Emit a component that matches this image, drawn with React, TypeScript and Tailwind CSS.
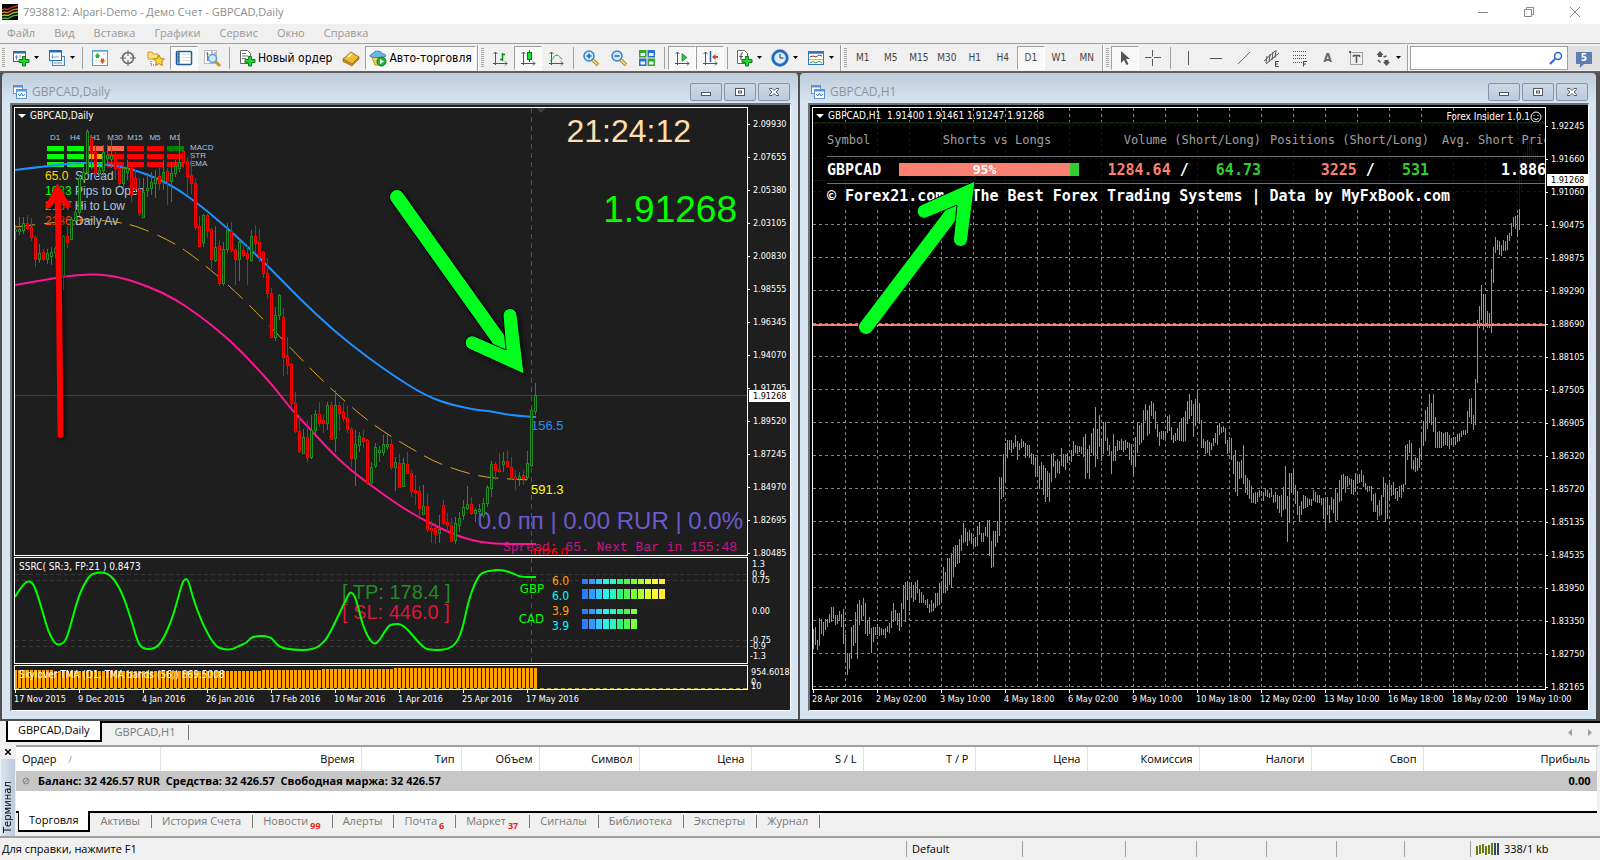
import type { ReactNode } from 'react';
import { clsx } from 'clsx';

/* ------------------------------------------------------------------ */
/* Chart data: plot coordinates, already projected to canvas pixels    */
/* ------------------------------------------------------------------ */

// high, body top, body bottom, low; "+" marks a bullish candle
const DAILY_CANDLES = `
225 229 231 240+,217 229 231 235+,217 223 230 234+,215 223 228 230,218 227 237 241,236 237 259 267,244 253 259 263+,249 252 259 261,
249 253 259 264+,247 252 256 265+,246 248 252 258+,248 252 270 275,235 236 275 290+,226 236 242 248,217 219 239 240+,203 212 220 222+,
175 178 212 216+,168 172 179 182+,129 131 172 174+,137 138 153 170,145 152 173 178,166 170 173 177+,145 152 170 178+,145 155 158 165+,
137 155 159 168+,152 159 168 180,165 168 183 186,166 168 183 187+,160 168 172 180+,166 168 195 202,170 178 188 192,178 190 213 216,
178 192 217 218+,173 188 190 197+,172 182 188 195+,170 177 183 198+,167 176 183 190,160 172 180 190+,168 171 181 205,162 173 181 202+,
160 166 173 177+,133 162 168 172+,149 151 162 168,157 161 176 194,155 175 183 194,178 183 227 230,216 226 246 247,214 215 242 247+,
214 215 230 238,228 229 259 269,226 247 260 262+,240 246 283 286,242 249 283 286+,223 230 249 253+,222 231 250 253,248 250 259 285,
241 242 259 281+,243 250 255 257,245 253 258 285,230 236 260 262+,225 236 243 252,229 242 256 262,251 252 273 278,258 273 293 298,
288 293 337 338,307 315 337 341+,294 295 315 320+,308 317 357 376,337 356 365 375,363 364 403 408,392 403 431 433,415 431 451 453,
429 437 453 454+,420 437 457 462,415 430 457 459+,410 414 430 437+,402 414 423 427,415 420 423 433,402 405 423 430+,402 405 439 440,
390 405 438 452+,402 405 413 431,403 412 418 422,406 418 429 433,427 429 458 467,430 444 458 486+,432 436 445 452+,430 438 441 448,
439 440 482 485,462 467 482 486+,443 447 466 468+,446 450 452 462+,435 444 452 456+,435 444 446 450+,439 444 467 470,457 462 467 491+,
454 463 487 488,458 463 486 487+,452 464 473 474,470 473 491 497,475 490 492 505,486 491 508 517,485 506 514 515+,494 506 529 532,
521 528 530 543,523 528 534 544,515 529 533 543+,500 505 523 525,513 522 525 533,518 525 541 542,517 523 540 544+,512 518 525 532+,
500 507 515 520+,486 504 508 510+,497 504 513 515,508 510 513 522+,504 509 511 524+,498 503 515 518+,485 487 503 507+,461 464 488 497+,
462 464 470 480,453 469 471 473,452 461 464 472+,450 461 466 467,457 467 477 480,470 477 479 490,472 476 478 486+,470 475 478 485,
451 463 477 480+,408 410 465 467+,383 395 411 415+`
  .split(',')
  .map((row) => ({ up: row.endsWith('+'), v: row.replace('+', '').trim().split(' ').map(Number) }));

// high-low pairs of the hourly bars
const HOURLY_BARS = `
629-649 627-645 640-650 618-646 619-634 622-636 619-630 619-627 614-623 607-622 607-619 615-625 615-624 611-620 614-627 609-644 634-663 653-675 653-669 627-659
625-646 612-643 604-659 600-625 605-620 598-616 603-634 621-636 617-634 628-653 627-642 627-635 625-635 627-636 628-635 629-635 628-638 626-632 623-633 611-628
603-622 610-621 613-625 613-631 603-627 585-609 582-622 581-600 582-611 582-598 585-602 582-600 580-593 589-603 592-603 595-603 600-605 599-608 604-613 600-612
603-611 593-608 593-606 583-605 581-603 567-593 572-593 558-591 558-585 553-588 547-577 545-567 545-564 539-563 535-551 523-543 528-542 532-546 530-541 533-544
538-546 537-547 526-546 522-535 533-542 533-542 527-536 520-537 520-556 541-568 531-567 531-547 521-543 477-536 477-499 454-497 443-482 440-458 440-450 440-453
443-449 435-447 441-460 443-450 439-448 441-447 443-458 445-456 445-458 453-464 454-465 457-477 459-477 466-489 462-480 465-495 468-502 471-497 473-502 454-482
453-467 461-478 459-473 461-474 448-466 454-467 454-470 453-463 456-461 450-462 441-456 445-453 446-454 446-452 447-454 437-457 434-479 449-473 445-479 433-453
428-456 407-467 429-459 415-447 439-461 422-454 422-441 438-451 445-455 451-474 434-461 446-461 440-451 441-450 439-450 441-452 440-450 442-448 443-460 444-465
456-474 437-467 422-453 425-445 423-443 410-440 404-421 410-436 405-434 401-416 403-419 411-429 424-437 432-446 431-439 431-440 431-440 416-433 415-431 427-440
435-443 433-441 428-440 422-441 418-441 417-442 411-441 401-424 394-419 400-416 404-437 399-426 391-420 403-424 420-448 439-448 441-454 440-453 442-456 443-450
438-446 433-443 425-445 423-435 427-433 426-432 428-444 440-454 437-452 438-460 455-474 450-492 461-496 462-479 460-478 445-484 475-493 478-495 480-499 486-503
493-503 492-504 492-502 490-497 491-496 492-501 488-496 490-497 493-498 488-497 495-503 492-502 495-509 496-513 495-517 487-510 466-509 496-542 473-523 473-493
470-494 485-504 491-515 506-522 501-515 495-509 496-508 498-507 499-505 499-506 490-501 492-502 495-503 495-503 498-505 498-519 497-528 497-515 505-523 497-510
499-513 488-521 493-520 480-502 475-501 474-489 476-493 476-487 478-485 479-494 480-495 473-492 477-484 474-483 470-482 475-487 483-490 486-492 486-491 486-501
494-512 493-512 505-520 500-516 495-515 477-497 483-522 485-519 483-500 485-496 482-495 488-499 491-501 486-497 485-498 484-492 445-485 444-460 440-453 443-469
460-470 457-472 458-471 448-468 433-460 421-446 410-441 407-429 394-423 403-425 394-432 417-448 432-448 431-448 432-448 433-446 432-445 432-446 435-449 438-445
437-446 437-445 434-442 433-441 431-437 430-435 430-435 411-433 399-417 398-424 415-430 379-425 320-383 306-328 285-320 294-330 294-327 311-328 313-328 269-333
247-283 237-253 240-250 241-255 245-256 240-251 241-251 235-250 233-241 223-236 217-227 216-229 215-237 155-230 162-189 153-168 153-165 142-165 140-168 146-160
150-165 153-166 151-164 165-181`
  .trim()
  .split(/\s+/)
  .map((pair) => pair.split('-').map(Number));

const UPPER_BAND =
  '15,170 47,166 87,162 123,167 147,174 173,186 200,205 233,233 267,265 300,299 333,330 367,357 400,380 425,395 445,403 475,410 490,411 503,414 520,416 536,417';
const MIDDLE_BAND =
  '15,227 50,223 87,219 117,222 137,226 173,242 200,261 233,289 267,323 300,358 330,388 363,417 387,434 412,449 435,462 460,471 483,477 507,479 532,480';
const LOWER_BAND =
  '15,285 50,279 67,276 95,274 120,277 150,287 175,299 200,316 230,340 255,366 275,388 290,408 310,429 333,454 353,472 380,492 400,506 420,518 440,528 460,537 488,544 536,544';
const SSRC_LINE =
  '15,597 24,582 32,581 37,593 43,613 48,631 55,644 60,645 66,641 72,620 79,595 87,579 93,573 106,572 115,580 123,595 132,622 137,640 142,649 155,649 163,640 173,617 182,583 185,579 188,579 193,598 202,623 213,643 220,649 232,650 238,646 247,643 252,636 271,636 278,647 293,650 313,650 325,642 335,623 347,597 351,591 356,598 363,627 372,644 378,643 388,626 393,624 403,624 420,644 427,650 447,650 457,643 463,627 468,603 473,588 478,577 483,572 495,570 503,570 515,574 520,577 536,577';

// quadratic segments through the midpoints, so indicator lines bend softly
function smooth(points: string) {
  const p = points.split(' ').map((pair) => pair.split(',').map(Number));
  const last = p[p.length - 1];
  const mid = p
    .slice(1, -1)
    .map(([x, y], i) => {
      const [nx, ny] = p[i + 2];
      return `Q${x} ${y} ${(x + nx) / 2} ${(y + ny) / 2}`;
    })
    .join('');
  return `M${p[0].join(' ')}${mid}L${last.join(' ')}`;
}

const DAILY_PRICES = ['2.09930', '2.07655', '2.05380', '2.03105', '2.00830', '1.98555', '1.96345', '1.94070', '1.91795', '1.89520', '1.87245', '1.84970', '1.82695', '1.80485'];
const HOURLY_PRICES = ['1.92245', '1.91660', '1.91060', '1.90475', '1.89875', '1.89290', '1.88690', '1.88105', '1.87505', '1.86905', '1.86320', '1.85720', '1.85135', '1.84535', '1.83950', '1.83350', '1.82750', '1.82165'];
const DAILY_DATES = ['17 Nov 2015', '9 Dec 2015', '4 Jan 2016', '26 Jan 2016', '17 Feb 2016', '10 Mar 2016', '1 Apr 2016', '25 Apr 2016', '17 May 2016'];
const HOURLY_DATES = ['28 Apr 2016', '2 May 02:00', '3 May 10:00', '4 May 18:00', '6 May 02:00', '9 May 10:00', '10 May 18:00', '12 May 02:00', '13 May 10:00', '16 May 18:00', '18 May 02:00', '19 May 10:00'];

const TREND_COLUMNS = [
  { name: 'D1', cells: ['bg-[#00ff00]', 'bg-[#00ff00]', 'bg-[#00ff00]'] },
  { name: 'H4', cells: ['bg-[#00ff00]', 'bg-[#00ff00]', 'bg-[#00ff00]'] },
  { name: 'H1', cells: ['bg-[#ff6347]', 'bg-[#ffa500]', 'bg-[#00ff00]'] },
  { name: 'M30', cells: ['bg-[#ff6347]', 'bg-[#ff0000]', 'bg-[#ff0000]'] },
  { name: 'M15', cells: ['bg-[#ff0000]', 'bg-[#ff0000]', 'bg-[#ff0000]'] },
  { name: 'M5', cells: ['bg-[#ff0000]', 'bg-[#ff0000]', 'bg-[#ff0000]'] },
  { name: 'M1', cells: ['bg-[#008000]', 'bg-[#ff0000]', 'bg-[#ff0000]'] },
];

const METER_COLORS = ['#2e7bff', '#2e9bff', '#2ecbff', '#2ef0f0', '#2ef5b8', '#30f080', '#50f550', '#7bff3c', '#a8ff38', '#d8ff38', '#fff838', '#ffe838'];

/* ------------------------------------------------------------------ */
/* Icons                                                               */
/* ------------------------------------------------------------------ */

function Icon({ children, size = 'size-[18px]' }: { children: ReactNode; size?: string }) {
  return (
    <svg viewBox="0 0 18 18" className={clsx(size, 'shrink-0')} fill="none" aria-hidden="true">
      {children}
    </svg>
  );
}

const plus = <path d="M10.500 7.500h3v3h3.500v3h-3.500v3.500h-3v-3.500H7v-3h3.500z" fill="#16e02c" stroke="#0b7d17" />;
const axes = <path d="M4.500 3v13M2.500 5l2-2 2 2M2 14.500h14M14 12.500l2 2-2 2" stroke="#555" />;
const lens = (
  <>
    <path d="M11 11l5 5" stroke="#b8860b" strokeWidth="3.500" />
    <path d="M11 11l4.500 4.500" stroke="#ffe48a" strokeWidth="1.500" />
    <circle cx="7" cy="7" r="5" fill="#cfe9fb" stroke="#3b82c4" strokeWidth="1.500" />
  </>
);

const NewChartIcon = () => (
  <Icon>
    <rect x="1.500" y="2.500" width="12" height="10" fill="#fff" stroke="#2c6aa8" />
    <path d="M1 3.500h13" stroke="#2c6aa8" strokeWidth="2" />
    <path d="M4.500 6v5M3 8h3M8 6v3" stroke="#6a8fb5" />
    {plus}
  </Icon>
);

const ProfilesIcon = () => (
  <Icon>
    <rect x="4.500" y="7.500" width="12" height="9" fill="#e8f2fb" stroke="#4a86c0" />
    <rect x="1.500" y="1.500" width="12" height="10" fill="#fff" stroke="#2c6aa8" />
    <path d="M1 2.500h13" stroke="#2c6aa8" strokeWidth="2" />
    <path d="M4.500 5v5M3 8h8M6 14h8" stroke="#7fa5cc" />
  </Icon>
);

const MarketWatchIcon = () => (
  <Icon>
    <rect x="1.500" y="1.500" width="15" height="15" fill="#fff" stroke="#5d9bd3" />
    <path d="M2 2.500h14" stroke="#8fbde6" />
    <path d="M6.500 4l3 3.500h-1.500V9H5V7.500H3.500z" fill="#26b33a" />
    <path d="M11.500 15l-3-3.500H10V9.500h3v2h1.500z" fill="#f0562a" />
    <path d="M12 5h3M3 12h3" stroke="#c9d6e2" />
  </Icon>
);

const NavigatorIcon = () => (
  <Icon>
    <circle cx="9" cy="9" r="5.500" stroke="#666" strokeWidth="1.500" />
    <path d="M9 1v6M9 11v6M1 9h6M11 9h6" stroke="#666" />
  </Icon>
);

const FavoritesIcon = () => (
  <Icon>
    <path d="M1 3h4l1 2h5v5H1z" fill="#ffe07a" stroke="#c99a1c" />
    <path d="M4 12v4h4" stroke="#555" strokeDasharray="1 1" />
    <path d="M12 6l1.700 3.500 3.800.500-2.800 2.600.700 3.900-3.400-1.900-3.400 1.900.700-3.900L6.500 10l3.800-.500z" fill="#ffd534" stroke="#b8860b" />
  </Icon>
);

const TerminalIcon = () => (
  <Icon>
    <rect x="1.500" y="2.500" width="15" height="13" rx="1" fill="#fff" stroke="#1f5c99" strokeWidth="1.500" />
    <rect x="2" y="3" width="3" height="12" fill="#5b9bd8" />
    <path d="M7 5.500h8M7 8.500h8M7 11.500h8" stroke="#d5dbe2" />
    <path d="M3 5h1M3 8h1M3 11h1" stroke="#123" />
  </Icon>
);

const TesterIcon = () => (
  <Icon>
    <rect x="1.500" y="1.500" width="12" height="13" fill="#fff" stroke="#b9b9b9" />
    <path d="M4.500 3v9M3 5h3M9 2v4M12 3v5" stroke="#777" />
    <path d="M12 12l5 5" stroke="#c9961a" strokeWidth="3" />
    <circle cx="9.500" cy="9.500" r="4" fill="#cfe6fb" stroke="#5d9bd3" strokeWidth="1.500" />
  </Icon>
);

const NewOrderIcon = () => (
  <Icon>
    <path d="M2.500 1.500h7l3 3v10h-10z" fill="#fff" stroke="#666" />
    <path d="M4 4.500h4M4 7h6M4 9.500h4" stroke="#777" />
    {plus}
  </Icon>
);

const BookIcon = () => (
  <Icon>
    <path d="M1 10l8-7 8 5-7 8z" fill="#eebc3c" stroke="#a8740e" />
    <path d="M1 10v2.500L10 17l7-7V8l-7 7z" fill="#c98e1b" stroke="#8a5d08" strokeWidth=".6" />
    <path d="M6 8l4-3.500" stroke="#fff0b0" strokeWidth="2" />
  </Icon>
);

const AutoTradeIcon = () => (
  <Icon>
    <path d="M3 8l3 8h6l3-8z" fill="#f7d35c" stroke="#c1911c" />
    <path d="M1 7c0-2 3-2 3.500-3C5 1.500 12 1.500 12.500 4 13 5 17 5 17 7c0 2-16 2-16 0z" fill="#6fb5e6" stroke="#3b82b8" />
    <circle cx="12.500" cy="12.500" r="4.500" fill="#1fb52f" stroke="#0e7a1a" />
    <path d="M11 10l4 2.500-4 2.500z" fill="#fff" />
  </Icon>
);

const BarsIcon = () => (
  <Icon>
    {axes}
    <path d="M11.500 4v8M9 10.500h2.500M11.500 5.500H14" stroke="#0a8f1d" strokeWidth="1.500" />
  </Icon>
);

const CandlesIcon = () => (
  <Icon>
    {axes}
    <path d="M10.500 1v12" stroke="#0a7a18" />
    <rect x="8.500" y="3.500" width="4" height="7" fill="#1fdc35" stroke="#0a7a18" />
  </Icon>
);

const LineIcon = () => (
  <Icon>
    {axes}
    <path d="M3 12c3-1 4-6 7-6 2 0 3 3 5 4" stroke="#2a9b3a" />
  </Icon>
);

const ZoomInIcon = () => (
  <Icon>
    {lens}
    <path d="M4.500 7h5M7 4.500v5" stroke="#1f66ad" strokeWidth="1.500" />
  </Icon>
);

const ZoomOutIcon = () => (
  <Icon>
    {lens}
    <path d="M4.500 7h5" stroke="#1f66ad" strokeWidth="1.500" />
  </Icon>
);

const TileIcon = () => (
  <Icon>
    <rect x="1" y="1" width="7.500" height="7.500" fill="#3aa330" />
    <rect x="9.500" y="1" width="7.500" height="7.500" fill="#2d6fd0" />
    <rect x="1" y="9.500" width="7.500" height="7.500" fill="#2d6fd0" />
    <rect x="9.500" y="9.500" width="7.500" height="7.500" fill="#3aa330" />
    <path d="M2.500 5.500h4.500M11 5.500h4.500M2.500 14h4.500M11 14h4.500" stroke="#e6f4ff" strokeWidth="3" />
  </Icon>
);

const AutoScrollIcon = () => (
  <Icon>
    {axes}
    <path d="M9 4.500l5 4-5 4z" fill="#27c93a" stroke="#0a7a18" strokeWidth=".6" />
  </Icon>
);

const ShiftIcon = () => (
  <Icon>
    {axes}
    <path d="M9.500 2v11" stroke="#1f66ad" strokeWidth="1.500" />
    <path d="M11 8l3.500-3v2H17v2h-2.500v2z" fill="#d1481c" />
  </Icon>
);

const IndicatorsIcon = () => (
  <Icon>
    <path d="M2.500 1.500h7l3 3v10h-10z" fill="#fff" stroke="#666" />
    <path d="M8 4c-1.500-.500-2 .500-2 2v5M4.500 7.500H8" stroke="#444" />
    {plus}
  </Icon>
);

const ClockIcon = () => (
  <Icon>
    <circle cx="9" cy="9" r="7" fill="#d8ecfb" stroke="#1d6fc6" strokeWidth="2.500" />
    <circle cx="9" cy="9" r="8.300" stroke="#164e8c" strokeWidth=".6" />
    <path d="M9 5v4h3.500" stroke="#333" />
  </Icon>
);

const TemplateIcon = () => (
  <Icon>
    <rect x="1.500" y="2.500" width="15" height="13" fill="#fff" stroke="#2f78bd" />
    <path d="M1 3.500h16" stroke="#2f78bd" strokeWidth="2.500" />
    <path d="M3 8l3-1 3 1 3-2 3 1" stroke="#8b3a1c" />
    <path d="M2 10.500h14" stroke="#9ab8d6" />
    <path d="M3 14l3-1.500 3 1.500 3-2 3 2" stroke="#2a9b3a" />
  </Icon>
);

const CursorIcon = () => (
  <Icon>
    <path d="M5 2v12l3-3 2.500 5 2-1-2.500-5h4z" fill="#555" />
  </Icon>
);

const CrosshairIcon = () => (
  <Icon>
    <path d="M8.500 1v6.500M8.500 10v7M1 8.500h6.500M10 8.500h7" stroke="#555" />
  </Icon>
);

const VLineIcon = () => (
  <Icon>
    <path d="M9.500 2v14" stroke="#555" />
  </Icon>
);

const HLineIcon = () => (
  <Icon>
    <path d="M3 9.500h12" stroke="#555" />
  </Icon>
);

const TrendIcon = () => (
  <Icon>
    <path d="M3 15L15 3" stroke="#666" />
  </Icon>
);

const ChannelIcon = () => (
  <Icon>
    <path d="M1 12L12 2M3 15L16 4" stroke="#555" />
    <path d="M4 7l-1 7M7 5l-1 8M10 3l-1 8M13 1l-1 8" stroke="#555" />
    <path d="M16 12.500h-3.500v5H16M12.500 15H15" stroke="#444" />
  </Icon>
);

const FiboIcon = () => (
  <Icon>
    <path d="M2 2.500h14M2 6.500h14M2 9.500h14M2 13.500h9" stroke="#555" strokeDasharray="1 1" />
    <path d="M12.500 17.500v-5H16M12.500 15H15" stroke="#444" />
  </Icon>
);

const LabelIcon = () => (
  <Icon>
    <rect x="3.500" y="3.500" width="12" height="12" stroke="#555" strokeDasharray="1 1" />
    <path d="M6 6.500h7M9.500 6v8M6.500 6v2M12.500 6v2" stroke="#555" strokeWidth="1.500" />
    <path d="M2 2h2v2H2z" fill="#555" />
  </Icon>
);

const ShapesIcon = () => (
  <Icon>
    <path d="M6 2l3.500 4H8v2H4V6H2.500zM12.500 17L9 13h1.500v-2h4v2H16z" fill="#555" />
    <path d="M4 11l2.500 2.500M9.500 8l3-1" stroke="#555" strokeWidth="1.500" />
  </Icon>
);

const ChartDocIcon = () => (
  <svg viewBox="0 0 14 14" className="size-[14px] shrink-0" fill="none" aria-hidden="true">
    <rect x=".5" y=".5" width="9" height="8" fill="#fff" stroke="#5b93d6" />
    <path d="M0 1.500h10" stroke="#5b93d6" strokeWidth="2" />
    <rect x="3.500" y="4.500" width="10" height="9" fill="#fff" stroke="#5b93d6" />
    <path d="M3 5.500h11" stroke="#5b93d6" strokeWidth="2" />
    <path d="M5 9l2 2 1.500-3L10 11l2-2" stroke="#4a7fd0" />
  </svg>
);

const Caret = () => (
  <svg viewBox="0 0 5 3" className="h-[3px] w-[5px] shrink-0" aria-hidden="true">
    <path d="M0 0h5L2.500 3z" fill="#000" />
  </svg>
);

/* ------------------------------------------------------------------ */
/* Toolbar                                                             */
/* ------------------------------------------------------------------ */

interface ToolButtonProps {
  label: string;
  pressed?: boolean;
  caret?: boolean;
  children: ReactNode;
}

function ToolButton({ label, pressed, caret, children }: ToolButtonProps) {
  return (
    <button
      type="button"
      aria-label={label}
      aria-pressed={pressed}
      className={clsx(
        'flex h-6 shrink-0 items-center justify-center border',
        caret ? 'w-[36px] gap-1' : 'w-[28px]',
        pressed ? 'border-t-[#a0a0a0] border-r-white border-b-white border-l-[#a0a0a0] bg-[#f8f8f8]' : 'border-transparent'
      )}
    >
      {children}
      {caret && <Caret />}
    </button>
  );
}

const Separator = () => <span className="mx-[3px] h-[22px] w-px shrink-0 bg-[#a0a0a0]" />;

const Grip = () => (
  <span className="mx-[2px] h-[20px] w-[3px] shrink-0 bg-[repeating-linear-gradient(to_bottom,#a8a8a8_0_1px,transparent_1px_2px)]" />
);

const BandEdge = () => <span className="ml-[1px] h-[26px] w-[2px] shrink-0 border-l border-[#a0a0a0] bg-white" />;

function Toolbar() {
  return (
    <div className="flex h-[28px] shrink-0 items-center border-t border-[#a0a0a0] bg-[#f0f0f0] font-['DejaVu_Sans_Condensed','DejaVu_Sans',sans-serif]">
      <Grip />
      <ToolButton label="Новый график" caret><NewChartIcon /></ToolButton>
      <ToolButton label="Профили" caret><ProfilesIcon /></ToolButton>
      <Separator />
      <ToolButton label="Обзор рынка"><MarketWatchIcon /></ToolButton>
      <ToolButton label="Окно данных"><NavigatorIcon /></ToolButton>
      <ToolButton label="Навигатор"><FavoritesIcon /></ToolButton>
      <ToolButton label="Терминал" pressed><TerminalIcon /></ToolButton>
      <ToolButton label="Тестер стратегий"><TesterIcon /></ToolButton>
      <Separator />
      <button type="button" className="flex h-6 shrink-0 items-center gap-[2px] px-[5px] text-xs whitespace-nowrap">
        <NewOrderIcon />
        Новый ордер
      </button>
      <ToolButton label="MetaEditor"><BookIcon /></ToolButton>
      <button
        type="button"
        aria-pressed="true"
        className="flex h-6 shrink-0 items-center gap-[2px] border border-t-[#a0a0a0] border-r-white border-b-white border-l-[#a0a0a0] bg-[#f8f8f8] px-[3px] text-xs whitespace-nowrap"
      >
        <AutoTradeIcon />
        Авто-торговля
      </button>
      <BandEdge />
      <Grip />
      <ToolButton label="Бары"><BarsIcon /></ToolButton>
      <ToolButton label="Японские свечи" pressed><CandlesIcon /></ToolButton>
      <ToolButton label="Линия"><LineIcon /></ToolButton>
      <Separator />
      <ToolButton label="Увеличить"><ZoomInIcon /></ToolButton>
      <ToolButton label="Уменьшить"><ZoomOutIcon /></ToolButton>
      <ToolButton label="Окна мозаикой"><TileIcon /></ToolButton>
      <Separator />
      <ToolButton label="Автопрокрутка" pressed><AutoScrollIcon /></ToolButton>
      <ToolButton label="Сдвиг графика" pressed><ShiftIcon /></ToolButton>
      <Separator />
      <ToolButton label="Индикаторы" caret><IndicatorsIcon /></ToolButton>
      <ToolButton label="Периоды" caret><ClockIcon /></ToolButton>
      <ToolButton label="Шаблоны" caret><TemplateIcon /></ToolButton>
      <BandEdge />
      <Grip />
      {['M1', 'M5', 'M15', 'M30', 'H1', 'H4', 'D1', 'W1', 'MN'].map((tf) => (
        <ToolButton key={tf} label={tf} pressed={tf === 'D1'}>
          <span className="text-[10px] text-[#444]">{tf}</span>
        </ToolButton>
      ))}
      <BandEdge />
      <Grip />
      <ToolButton label="Курсор" pressed><CursorIcon /></ToolButton>
      <ToolButton label="Перекрестие"><CrosshairIcon /></ToolButton>
      <Separator />
      <ToolButton label="Вертикальная линия"><VLineIcon /></ToolButton>
      <ToolButton label="Горизонтальная линия"><HLineIcon /></ToolButton>
      <ToolButton label="Трендовая линия"><TrendIcon /></ToolButton>
      <ToolButton label="Равноудаленный канал"><ChannelIcon /></ToolButton>
      <ToolButton label="Линии Фибоначчи"><FiboIcon /></ToolButton>
      <ToolButton label="Текст">
        <span className="text-xs font-bold text-[#666]">A</span>
      </ToolButton>
      <ToolButton label="Метка"><LabelIcon /></ToolButton>
      <ToolButton label="Стрелки" caret><ShapesIcon /></ToolButton>
      <BandEdge />
      <label className="ml-[1px] flex h-6 min-w-0 flex-1 items-center border border-[#a0a0a0] bg-white pr-1">
        <input type="text" aria-label="Поиск" className="h-full min-w-0 flex-1 px-1 text-[11px] outline-none" />
        <svg viewBox="0 0 14 14" className="size-[14px] shrink-0" fill="none" aria-hidden="true">
          <path d="M1 13l5-5" stroke="#2a62d8" strokeWidth="2" />
          <circle cx="9" cy="5" r="3.500" stroke="#2a62d8" strokeWidth="1.500" />
        </svg>
      </label>
      <button type="button" aria-label="Сообщения: 5" className="flex h-6 w-[32px] shrink-0 items-center justify-center bg-[#e0e0e0]">
        <span className="relative flex h-3 w-4 items-center justify-center bg-[#5f7db5] text-[10px] leading-none font-bold text-white">
          5
          <span className="absolute top-3 left-1 border-t-4 border-r-4 border-t-[#5f7db5] border-r-transparent" />
        </span>
      </button>
    </div>
  );
}

/* ------------------------------------------------------------------ */
/* Chart windows                                                       */
/* ------------------------------------------------------------------ */

function WindowButton({ label, children }: { label: string; children: ReactNode }) {
  return (
    <button
      type="button"
      aria-label={label}
      className="flex h-[18px] w-[32px] items-center justify-center rounded-[2px] border border-[#8593ab] bg-linear-to-b from-[#cbd8e6] to-[#bccbdd]"
    >
      <svg viewBox="0 0 12 10" className="h-[10px] w-[12px]" fill="none" stroke="#4d5566">
        {children}
      </svg>
    </button>
  );
}

function ChartWindow({ title, children }: { title: string; children: ReactNode }) {
  return (
    <section className="flex min-w-0 flex-1 flex-col rounded-t-[4px] bg-[#d7e4f2] bg-linear-to-b from-[#bfcddb] to-[#d7e4f2] to-[30px] pr-[7px] pb-[8px] pl-[8px]">
      <header className="flex h-[30px] shrink-0 items-center gap-[5px] pt-[7px] pr-[1px] pl-[3px]">
        <ChartDocIcon />
        <h2 className="flex-1 text-xs text-[#8e959d]">{title}</h2>
        <div className="flex gap-[2px]">
          <WindowButton label="Свернуть">
            <rect x="1.500" y="5.500" width="9" height="3" fill="#fff" />
          </WindowButton>
          <WindowButton label="Развернуть">
            <rect x="1.500" y="1.500" width="9" height="7" fill="#fff" />
            <rect x="4.500" y="4" width="3" height="2" />
          </WindowButton>
          <WindowButton label="Закрыть">
            <path d="M1.500 1.500h2.500l2 2 2-2h2.500v1L8 5l2.500 2.500v1H8l-2-2-2 2H1.500v-1L4 5 1.500 2.500z" fill="#fff" />
          </WindowButton>
        </div>
      </header>
      <div className="flex min-h-0 flex-1 flex-col border-t-2 border-r border-b border-l-2 border-t-[#6e7275] border-r-white border-b-white border-l-[#6e7275]">
        {children}
      </div>
    </section>
  );
}

function PriceScale({ prices, current, tagClass, className }: { prices: string[]; current: string; tagClass: string; className: string }) {
  return (
    <div className="relative w-[42px] shrink-0 text-[9px] leading-[12px] text-white">
      <ul className={clsx('flex flex-col justify-between', className)}>
        {prices.map((price) => (
          <li key={price} className="flex items-center gap-[3px]">
            <span className="h-px w-[2px] bg-white" />
            {price}
          </li>
        ))}
      </ul>
      <span className={clsx('absolute right-0 left-[1px] bg-white pl-1 text-black', tagClass)}>{current}</span>
    </div>
  );
}

function DateScale({ dates }: { dates: string[] }) {
  return (
    <ol className="flex h-[20px] shrink-0 overflow-hidden text-[9px] leading-[12px] whitespace-nowrap text-white">
      {dates.map((date) => (
        <li key={date} className="w-16 shrink-0">
          <span className="ml-[1px] block h-[3px] w-px bg-white" />
          {date}
        </li>
      ))}
    </ol>
  );
}

function ChartTitle({ children }: { children: ReactNode }) {
  return (
    <p className="absolute top-[2px] left-[3px] flex items-center gap-1 text-[10px] leading-[12px] whitespace-pre text-white">
      <svg viewBox="0 0 8 4" className="h-1 w-2" aria-hidden="true">
        <path d="M0 0h8L4 4z" fill="#fff" />
      </svg>
      {children}
    </p>
  );
}

function TrendPanel() {
  return (
    <div className="absolute top-[25px] left-[32px] flex font-['Liberation_Sans',Arial,sans-serif] text-[8px] leading-[10px] text-[#b0c4de]">
      {TREND_COLUMNS.map((column) => (
        <div key={column.name} className="flex w-[20px] flex-col gap-[3px]">
          <span className="-ml-[2px] h-[10px] w-[20px] text-center">{column.name}</span>
          {column.cells.map((cell, i) => (
            <span key={i} className={clsx('h-[5px] w-[17px]', cell)} />
          ))}
        </div>
      ))}
      <div className="ml-[3px] flex flex-col pt-[11px] leading-[8px]">
        <span>MACD</span>
        <span>STR</span>
        <span>EMA</span>
      </div>
    </div>
  );
}

function StatsPanel() {
  const rows = [
    { value: '65.0', label: 'Spread', color: 'text-[#ffd700]' },
    { value: '1033', label: 'Pips to Open', color: 'text-[#00ff00]' },
    { value: '2157', label: 'Hi to Low', color: 'text-[#daa520]' },
    { value: '2136.0', label: 'Daily Av', color: 'text-[#ff4500]' },
  ];
  return (
    <dl className="absolute top-[61px] left-[30px] font-['Liberation_Sans',Arial,sans-serif] text-xs leading-[15px] text-[#b0c4de]">
      {rows.map((row) => (
        <div key={row.label} className="flex">
          <dt className="order-2 whitespace-nowrap">{row.label}</dt>
          <dd className={clsx('w-[30px]', row.color)}>{row.value}</dd>
        </div>
      ))}
    </dl>
  );
}

function DailyPlot() {
  return (
    <div className="relative min-w-0 flex-1 overflow-hidden border border-white font-['Liberation_Sans',Arial,sans-serif]">
      <div className="font-['DejaVu_Sans_Condensed','DejaVu_Sans',sans-serif]">
        <ChartTitle>GBPCAD,Daily</ChartTitle>
      </div>
      <TrendPanel />
      <StatsPanel />
      <p className="absolute top-[5px] right-[56px] text-[32px] leading-[36px] text-[#ffdead]">21:24:12</p>
      <p className="absolute top-[81px] right-[10px] text-[37px] leading-[42px] text-[#00ff00]">1.91268</p>
      <p className="absolute right-[4px] bottom-[20px] text-2xl leading-[28px] whitespace-nowrap text-[#6a5acd]">0.0 пп | 0.00 RUR | 0.0%</p>
      <p className="absolute right-[10px] bottom-0 font-['Liberation_Mono',monospace] text-[13px] leading-[14px] whitespace-nowrap text-[#c71585]">
        Spread: 65. Next Bar in 155:48
      </p>
      <p className="absolute top-[310px] left-[516px] text-[13px] leading-[15px] text-[#1e90ff]">156.5</p>
      <p className="absolute top-[374px] left-[516px] text-[13px] leading-[15px] text-[#ffff00]">591.3</p>
      <p className="absolute top-[438px] left-[516px] text-xs leading-[14px] text-[#ff0000]">1026.0</p>

      <svg viewBox="15 108 732 447" preserveAspectRatio="none" className="absolute inset-0 h-full w-full" fill="none" role="img" aria-label="GBPCAD Daily">
        <path d="M15 395.500H747" stroke="#404040" />
        <path d="M531.500 108V555" stroke="#5c5c10" strokeDasharray="5 4" />
        <path d="M536 108h10l-5 5z" fill="#3a3d42" />
        <path d={smooth(UPPER_BAND)} stroke="#1e90ff" strokeWidth="2" />
        <path d={smooth(MIDDLE_BAND)} stroke="#daa520" strokeDasharray="20 9" />
        <path d={smooth(LOWER_BAND)} stroke="#ff1493" strokeWidth="2" />
        <g shapeRendering="crispEdges">
          {DAILY_CANDLES.map(({ up, v }, i) => {
            const x = 15 + 4 * i;
            return (
              <g key={i} stroke={up ? '#228b22' : '#ff0000'} fill="#1e1e1e">
                <path d={`M${x + 0.5} ${v[0]}V${v[3]}`} />
                <rect x={x - 0.5} y={v[1] + 0.5} width="2" height={Math.max(v[2] - v[1], 1)} />
              </g>
            );
          })}
        </g>

        {/* annotation arrows */}
        <g className="drop-shadow-[2px_2px_2px_rgba(0,0,0,0.6)]">
          <path d="M397 197L504 347" stroke="#000" strokeWidth="16" strokeLinecap="round" />
          <path d="M397 197L504 347" stroke="#00ff1e" strokeWidth="14" strokeLinecap="round" />
          <path d="M503 316a7 7 0 0 1 14-1l7 59-55-25a7 7 0 0 1 5-13l32 14z" fill="#00ff1e" stroke="#000" />
        </g>
        <g className="drop-shadow-[2px_2px_2px_rgba(0,0,0,0.6)]">
          <path d="M58 196L60.500 435" stroke="#ff0000" strokeWidth="6" strokeLinecap="round" />
          <path d="M57.500 183L71 206q-1 3-5 2l-8-9-8 9q-4 1-5-2z" fill="#ff0000" />
        </g>
      </svg>
    </div>
  );
}

function StrengthMeter({ y, height, count }: { y: number; height: number; count: number }) {
  return (
    <>
      {METER_COLORS.slice(0, count).map((color, i) => (
        <rect key={color} x={582 + 7 * i} y={y} width="6" height={height} fill={color} />
      ))}
    </>
  );
}

function OscillatorPanel() {
  return (
    <div className="mt-[1px] flex h-[107px] shrink-0">
      <div className="relative min-w-0 flex-1 overflow-hidden border border-white">
        <p className="absolute top-[3px] left-1 text-[10px] leading-[12px] text-white">SSRC( SR:3, FP:21 ) 0.8473</p>
        <svg viewBox="15 558 732 105" preserveAspectRatio="none" className="absolute inset-0 h-full w-full" fill="none" role="img" aria-label="SSRC">
          <path d="M15 574.500H747M15 580.500H747M15 640.500H747M15 646.500H747" stroke="#383838" strokeDasharray="4 3" />
          <path d="M531.500 558V663" stroke="#5c5c10" strokeDasharray="5 4" />
          <g shapeRendering="crispEdges">
            <StrengthMeter y={579} height={5} count={12} />
            <StrengthMeter y={589} height={10} count={12} />
            <StrengthMeter y={609} height={5} count={8} />
            <StrengthMeter y={619} height={10} count={8} />
          </g>
        </svg>
        <div className="absolute top-[24px] left-[327px] font-['Liberation_Sans',Arial,sans-serif] text-[20px] leading-[20px] whitespace-nowrap">
          <p className="text-[#228b22]">[ TP: 178.4 ]</p>
          <p className="text-[#dc143c]">[ SL: 446.0 ]</p>
        </div>
        <svg viewBox="15 558 732 105" preserveAspectRatio="none" className="absolute inset-0 h-full w-full" fill="none" aria-hidden="true">
          <path d={smooth(SSRC_LINE)} stroke="#00ff00" strokeWidth="2" />
        </svg>
        <div className="absolute top-[16px] left-[500px] grid grid-cols-[29px_18px] gap-x-2 text-xs leading-[15px]">
          <span className="row-span-2 text-right text-[13px] leading-[30px] text-[#00ff00]">GBP</span>
          <span className="text-[#ffa500]">6.0</span>
          <span className="text-[#00ffff]">6.0</span>
          <span className="row-span-2 text-right text-[13px] leading-[30px] text-[#00ff00]">CAD</span>
          <span className="text-[#ffa500]">3.9</span>
          <span className="text-[#00ffff]">3.9</span>
        </div>
      </div>
      <div className="relative w-[42px] shrink-0 text-[9px] leading-[12px] text-white">
        <span className="absolute top-[1px] left-1">1.3</span>
        <span className="absolute top-[11px] left-1">0.9</span>
        <span className="absolute top-[17px] left-1">0.75</span>
        <span className="absolute top-[48px] left-1">0.00</span>
        <span className="absolute top-[77px] left-[2px]">-0.75</span>
        <span className="absolute top-[83px] left-[2px]">-0.9</span>
        <span className="absolute top-[93px] left-[2px]">-1.3</span>
      </div>
    </div>
  );
}

function HistogramPanel() {
  // bars grow slightly taller towards the latest quotes
  const topOf = (i: number) => (i < 10 ? 670 : i < 62 ? 671 : i < 77 ? 670 : i < 95 ? 669 : 668);
  return (
    <div className="mt-[1px] flex h-[25px] shrink-0">
      <div className="relative min-w-0 flex-1 overflow-hidden border border-white">
        <svg viewBox="15 666 732 23" preserveAspectRatio="none" className="absolute inset-0 h-full w-full" fill="none" shapeRendering="crispEdges" role="img" aria-label="TMA">
          <path d="M15 688.500H747" stroke="#a8a020" strokeDasharray="4 3" />
          {DAILY_CANDLES.map((_, i) => (
            <rect key={i} x={14 + 4 * i} y={topOf(i)} width="3" height={688 - topOf(i)} fill="#ffa500" />
          ))}
        </svg>
        <p className="absolute top-[3px] left-1 text-[10px] leading-[12px] text-white">Skylover TMA (D1, TMA bands (56)) 869.5008</p>
      </div>
      <div className="relative w-[42px] shrink-0 text-[9px] leading-[12px] text-white">
        <span className="absolute top-[1px] left-[3px]">954.6018</span>
        <span className="absolute top-[11px] left-[3px]">0</span>
        <span className="absolute top-[15px] left-[3px]">10</span>
      </div>
    </div>
  );
}

function DailyChart() {
  return (
    <div className="flex min-h-0 flex-1 flex-col bg-[#1e1e1e] pt-[2px] pl-[2px] font-['DejaVu_Sans_Condensed','DejaVu_Sans',sans-serif]">
      <div className="flex min-h-0 flex-1">
        <DailyPlot />
        <PriceScale prices={DAILY_PRICES} current="1.91268" tagClass="top-[63%]" className="h-[calc(100%+3px)] pt-[11px]" />
      </div>
      <OscillatorPanel />
      <HistogramPanel />
      <DateScale dates={DAILY_DATES} />
    </div>
  );
}

function InsiderTable() {
  return (
    <div className="absolute top-[14px] right-0 left-0 h-[87px] overflow-hidden border-t-2 border-[#0a200a] bg-black/85 pl-[14px] font-['DejaVu_Sans_Mono',monospace] whitespace-pre">
      <table className="w-[760px] table-fixed border-collapse">
        <colgroup>
          <col className="w-[72px]" />
          <col className="w-[180px]" />
          <col className="w-[182px]" />
          <col className="w-[168px]" />
          <col />
        </colgroup>
        <thead>
          <tr className="h-[32px] border-b border-[#707070] text-xs text-[#a0a0a0]">
            <th className="text-left font-normal">Symbol</th>
            <th className="pl-4 text-center font-normal">Shorts vs Longs</th>
            <th className="text-right font-normal">Volume (Short/Long)</th>
            <th className="text-right font-normal">Positions (Short/Long)</th>
            <th className="pl-[13px] text-left font-normal">Avg. Short Price</th>
          </tr>
        </thead>
        <tbody>
          <tr className="h-[27px] border-b border-[#707070] text-[15px] leading-[18px] font-bold text-white">
            <td>GBPCAD</td>
            <td>
              <div className="flex h-[13px] text-[13px] leading-[13px]">
                <span className="w-[95%] bg-[#fa8072] text-center">95%</span>
                <span className="flex-1 bg-[#32cd32]" />
              </div>
            </td>
            <td className="text-right">
              <span className="text-[#fa8072]">1284.64</span> / <span className="text-[#32cd32]">  64.73</span>
            </td>
            <td className="text-right">
              <span className="text-[#fa8072]">3225</span> / <span className="text-[#32cd32]">  531</span>
            </td>
            <td className="pl-[72px]">1.88682</td>
          </tr>
        </tbody>
      </table>
      <p className="text-[15px] leading-[24px] font-bold text-white">© Forex21.com | The Best Forex Trading Systems | Data by MyFxBook.com</p>
    </div>
  );
}

function HourlyChart() {
  return (
    <div className="flex min-h-0 flex-1 flex-col bg-black pt-[2px] pl-[2px] font-['DejaVu_Sans_Condensed','DejaVu_Sans',sans-serif]">
      <div className="flex min-h-0 flex-1">
        <div className="relative min-w-0 flex-1 overflow-hidden border border-white">
          <svg viewBox="813 108 732 581" preserveAspectRatio="none" className="absolute inset-0 h-full w-full" fill="none" shapeRendering="crispEdges" role="img" aria-label="GBPCAD H1">
            <g stroke="#778899" strokeDasharray="3 3">
              {HOURLY_PRICES.map((price, i) => (
                <path key={price} d={`M813 ${125.5 + 33 * i}H1545`} />
              ))}
              {Array.from({ length: 22 }, (_, i) => (
                <path key={i} d={`M${845.5 + 32 * i} 108V689`} />
              ))}
            </g>
            <path d="M813 180.500H1545" stroke="#778899" />
            <path d="M813 325H1545" stroke="#fa8072" strokeWidth="2" />
            {HOURLY_BARS.map(([high, low], i) => (
              <path key={i} d={`M${813.5 + 2 * i} ${high}V${low}`} stroke="#00ff00" />
            ))}
          </svg>
          <ChartTitle>{'GBPCAD,H1  1.91400 1.91461 1.91247 1.91268'}</ChartTitle>
          <p className="absolute top-[3px] right-[3px] flex items-center text-[10px] leading-[12px] text-white">
            Forex Insider 1.0.1
            <svg viewBox="0 0 12 12" className="size-3" fill="none" stroke="#fff" aria-hidden="true">
              <circle cx="6" cy="6" r="5" />
              <path d="M4 4v1M8 4v1M3.500 7.500q2.500 2 5 0" />
            </svg>
          </p>
          <InsiderTable />
          <svg viewBox="813 108 732 581" preserveAspectRatio="none" className="absolute inset-0 h-full w-full" fill="none" aria-hidden="true">
            <path d="M866 327L953 212" stroke="#000" strokeWidth="16" strokeLinecap="round" />
            <path d="M866 327L953 212" stroke="#00ff1e" strokeWidth="14" strokeLinecap="round" />
            <path d="M921 205l54-24-7.500 59a7 7 0 0 1-14-1l3.500-34-31 13a7 7 0 0 1-5-13z" fill="#00ff1e" stroke="#000" />
          </svg>
        </div>
        <PriceScale prices={HOURLY_PRICES} current="1.91268" tagClass="top-[11.5%]" className="h-[calc(100%+3px)] pt-[13px]" />
      </div>
      <DateScale dates={HOURLY_DATES} />
    </div>
  );
}

/* ------------------------------------------------------------------ */
/* Terminal                                                            */
/* ------------------------------------------------------------------ */

const ORDER_COLUMNS = [
  { name: 'Ордер', width: 'w-[144px]' },
  { name: 'Время', width: 'w-[201px]' },
  { name: 'Тип', width: 'w-[100px]' },
  { name: 'Объем', width: 'w-[78px]' },
  { name: 'Символ', width: 'w-[100px]' },
  { name: 'Цена', width: 'w-[112px]' },
  { name: 'S / L', width: 'w-[112px]' },
  { name: 'T / P', width: 'w-[112px]' },
  { name: 'Цена', width: 'w-[112px]' },
  { name: 'Комиссия', width: 'w-[112px]' },
  { name: 'Налоги', width: 'w-[112px]' },
  { name: 'Своп', width: 'w-[112px]' },
  { name: 'Прибыль', width: '' },
];

const TERMINAL_TABS = [
  { name: 'Активы' },
  { name: 'История Счета' },
  { name: 'Новости', count: 99 },
  { name: 'Алерты' },
  { name: 'Почта', count: 6 },
  { name: 'Маркет', count: 37 },
  { name: 'Сигналы' },
  { name: 'Библиотека' },
  { name: 'Эксперты' },
  { name: 'Журнал' },
];

function Terminal() {
  return (
    <section className="flex h-[91px] shrink-0">
      <div className="flex w-4 shrink-0 flex-col items-center">
        <button type="button" aria-label="Закрыть" className="flex h-[14px] w-3 items-center justify-center">
          <svg viewBox="0 0 6 6" className="size-[6px]" stroke="#000" strokeWidth="1.500" aria-hidden="true">
            <path d="M0 0l6 6M6 0L0 6" />
          </svg>
        </button>
        <h2 className="flex w-[14px] flex-1 rotate-180 items-center bg-linear-to-l from-[#d7e4f2] to-[#bccbdd] pt-[3px] font-['DejaVu_Sans',sans-serif] text-[10px] leading-[14px] [writing-mode:vertical-rl]">
          Терминал
        </h2>
      </div>
      <div className="flex min-w-0 flex-1 flex-col border-t-2 border-r-[3px] border-[#a0a0a0] border-r-[#f0f0f0]">
        <table className="w-full table-fixed border-collapse bg-white">
          <colgroup>
            {ORDER_COLUMNS.map((column, i) => (
              <col key={i} className={column.width} />
            ))}
          </colgroup>
          <thead>
            <tr className="h-6">
              {ORDER_COLUMNS.map((column, i) => (
                <th key={i} className={clsx('border-r border-[#e2e2e2] px-[6px] font-normal', i === 0 ? 'text-left' : 'text-right')}>
                  {column.name}
                  {i === 0 && <span className="ml-3 text-[9px] text-[#888]">/</span>}
                </th>
              ))}
            </tr>
          </thead>
          <tbody>
            <tr className="h-[20px] bg-[#c6c6c6] font-bold">
              <td colSpan={12}>
                <div className="flex items-center gap-2 pl-[6px] whitespace-pre">
                  <svg viewBox="0 0 8 8" className="size-2" fill="#bbb" stroke="#888" aria-hidden="true">
                    <circle cx="4" cy="4" r="3" />
                    <path d="M2 6l4-4" />
                  </svg>
                  {'Баланс: 32 426.57 RUR  Средства: 32 426.57  Свободная маржа: 32 426.57'}
                </div>
              </td>
              <td className="pr-[6px] text-right">0.00</td>
            </tr>
          </tbody>
        </table>
        <div className="flex-1 bg-white" />
        <nav className="flex h-[25px] shrink-0 items-start border-t-2 border-black bg-[#f0f0f0] pl-[2px] text-[#7a7a7a]">
          <button type="button" className="-mt-[2px] h-[21px] border-r-2 border-b-2 border-l border-black bg-white px-[10px] text-black">
            Торговля
          </button>
          {TERMINAL_TABS.map((tab) => (
            <button key={tab.name} type="button" className="flex h-[17px] items-center pl-[10px] whitespace-nowrap">
              {tab.name}
              {tab.count && <sub className="bottom-0 ml-[2px] pt-[8px] text-[9px] leading-none font-bold text-[#e81c1c]">{tab.count}</sub>}
              <span className="ml-[11px] h-[13px] w-px bg-[#7a7a7a]" />
            </button>
          ))}
        </nav>
      </div>
    </section>
  );
}

function StatusBar() {
  const cell = 'h-full border-l border-[#a0a0a0]';
  return (
    <footer className="flex h-6 shrink-0 items-center border-t-2 border-[#a0a0a0] py-[3px]">
      <span className="flex-1 pl-[2px]">Для справки, нажмите F1</span>
      <span className={clsx(cell, 'flex w-[116px] items-center pl-[5px]')}>Default</span>
      <span className={clsx(cell, 'w-[103px]')} />
      <span className={clsx(cell, 'w-[71px]')} />
      <span className={clsx(cell, 'w-[70px]')} />
      <span className={clsx(cell, 'w-[70px]')} />
      <span className={clsx(cell, 'w-[68px]')} />
      <span className={clsx(cell, 'w-[66px]')} />
      <span className={clsx(cell, 'flex w-[130px] items-center gap-1 pl-[5px]')}>
        <svg viewBox="0 0 24 12" className="h-3 w-6" shapeRendering="crispEdges" aria-hidden="true">
          {Array.from({ length: 8 }, (_, i) => (
            <rect key={i} x={3 * i} y={i < 5 ? 3 - (i % 3) : 0} width="2" height={i < 5 ? 9 : 12} fill={i < 6 ? '#6b7a10' : '#2c4a6a'} />
          ))}
        </svg>
        338/1 kb
      </span>
    </footer>
  );
}

/* ------------------------------------------------------------------ */

export default function App() {
  return (
    <div className="flex h-screen flex-col overflow-hidden bg-[#f0f0f0] font-['Open_Sans','Noto_Sans',sans-serif] text-[11px] text-black">
      <header className="flex h-6 shrink-0 items-center gap-[5px] bg-white pl-[2px] text-[#8c8c8c]">
        <svg viewBox="0 0 16 16" className="size-4" fill="none" aria-hidden="true">
          <rect width="16" height="16" fill="#000" />
          <path d="M0 6c3-3 4 1 7-1s4-3 9-3" stroke="#e0301e" strokeWidth="1.500" />
          <path d="M0 9c3-3 4 1 7-1s4-3 9-3" stroke="#e8821e" strokeWidth="1.500" />
          <path d="M0 12c3-3 4 1 7-1s4-3 9-3" stroke="#a8d020" strokeWidth="1.500" />
          <path d="M0 15c3-3 4 1 7-1s4-3 9-3" stroke="#3cc828" strokeWidth="1.500" />
        </svg>
        <h1 className="flex-1">7938812: Alpari-Demo - Демо Счет - GBPCAD,Daily</h1>
        <div className="flex h-5 items-center gap-[36px] pr-[20px]">
          <button type="button" aria-label="Свернуть">
            <svg viewBox="0 0 10 10" className="size-[10px]" stroke="#888"><path d="M0 5.500h10" /></svg>
          </button>
          <button type="button" aria-label="Восстановить">
            <svg viewBox="0 0 10 10" className="size-[10px]" fill="none" stroke="#888"><path d="M.5 2.500h7v7h-7zM2.500 2.500v-2h7v7h-2" /></svg>
          </button>
          <button type="button" aria-label="Закрыть">
            <svg viewBox="0 0 10 10" className="size-[10px]" stroke="#888"><path d="M0 0l10 10M10 0L0 10" /></svg>
          </button>
        </div>
      </header>

      <nav className="flex h-[19px] shrink-0 items-center gap-[19px] pl-[7px] text-[#9a9a9a]">
        {['Файл', 'Вид', 'Вставка', 'Графики', 'Сервис', 'Окно', 'Справка'].map((item) => (
          <button key={item} type="button">{item}</button>
        ))}
      </nav>

      <Toolbar />

      <main className="flex min-h-0 flex-1 gap-[2px] border-y-2 border-t-[#606060] border-b-[#505050] bg-[#505050] pr-1 pl-[2px]">
        <ChartWindow title="GBPCAD,Daily"><DailyChart /></ChartWindow>
        <ChartWindow title="GBPCAD,H1"><HourlyChart /></ChartWindow>
      </main>

      <nav className="flex h-6 shrink-0 items-start pl-[6px]">
        <button type="button" className="h-[21px] border-r-2 border-b-2 border-l-2 border-black bg-white px-[10px]">GBPCAD,Daily</button>
        <div className="flex h-[21px] flex-1 items-center border-t-2 border-black pr-2 text-[#7a7a7a]">
          <button type="button" className="flex h-[15px] items-center border-r border-[#7a7a7a] px-[13px]">GBPCAD,H1</button>
          <span className="flex-1" />
          <svg viewBox="0 0 24 7" className="h-[7px] w-6" fill="#a0a0a0" aria-hidden="true">
            <path d="M4 0v7L0 3.500zM20 0v7l4-3.500z" />
          </svg>
        </div>
      </nav>

      <Terminal />
      <StatusBar />
    </div>
  );
}
